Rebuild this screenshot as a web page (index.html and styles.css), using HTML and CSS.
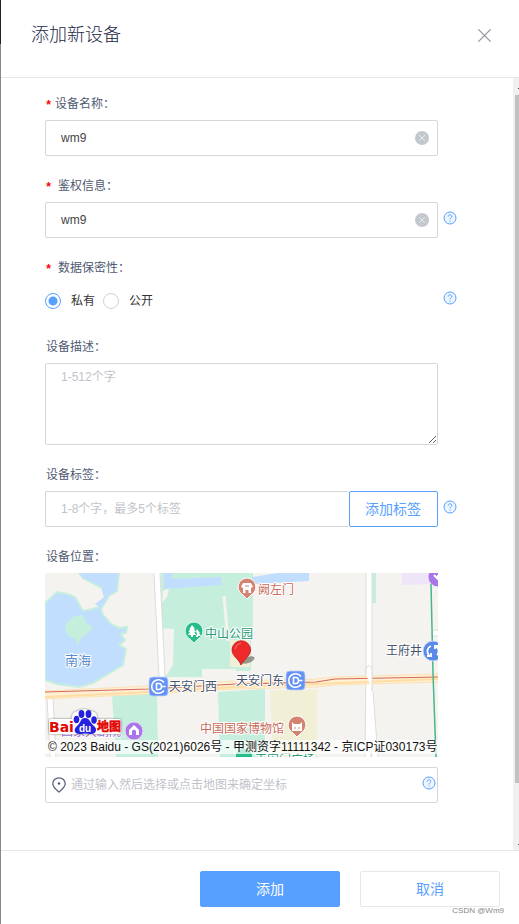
FILE: index.html
```html
<!DOCTYPE html>
<html lang="zh-CN">
<head>
<meta charset="utf-8">
<meta name="viewport" content="width=device-width, initial-scale=1">
<title>添加新设备</title>
<link rel="stylesheet" href="styles.css">
</head>
<body>
<svg class="defs" aria-hidden="true">
  <symbol id="help" viewBox="0 0 14 14">
    <circle cx="7" cy="7" r="6" fill="#edf5ff" stroke="#57a0ff"/>
    <path d="M5.2 5.6C5.2 3.2 8.8 3.2 8.8 5.5C8.8 6.8 7 6.8 7 8.4M7 9.6V10.6" fill="none" stroke="#57a0ff"/>
  </symbol>
  <symbol id="clear" viewBox="0 0 14 14">
    <circle cx="7" cy="7" r="7" fill="#c3c8ce"/>
    <path d="M4.2 4.2L9.8 9.8M9.8 4.2L4.2 9.8" stroke="#eceef0" stroke-width=".9"/>
  </symbol>
  <symbol id="metro" viewBox="0 0 20 20">
    <rect x=".5" y=".5" width="19" height="19" rx="4" fill="#6592f5" stroke="#a9c2f8"/>
    <path d="M15.500 6A6.800 6.800 0 1 0 15.500 14M8 7H10.500Q13 7 13 10T10.500 13H8ZM13 10H17" fill="none" stroke="#fff" stroke-width="1.600"/>
  </symbol>
  <symbol id="marker" viewBox="0 0 20 24">
    <path d="M10 1A9 9 0 0 0 6 18L10 22L14 18A9 9 0 0 0 10 1Z"/>
  </symbol>
</svg>

<main class="drawer">
  <header class="header">
    <h1 class="title">添加新设备</h1>
    <button class="close" type="button" aria-label="关闭">
      <svg viewBox="0 0 12 12"><path d="M.3 .3L11.7 11.7M11.7 .3L.3 11.7" stroke="#909399" stroke-width="1.1"/></svg>
    </button>
  </header>

  <div class="body">
    <form class="form" id="device-form">
      <div class="field">
        <label class="label" for="name"><span class="star">*</span>设备名称：</label>
        <div class="control">
          <input class="input" id="name" type="text" value="wm9">
          <button class="clear" type="button" aria-label="清空"><svg><use href="#clear"/></svg></button>
        </div>
      </div>

      <div class="field">
        <label class="label spaced" for="auth"><span class="star">*</span>鉴权信息：</label>
        <div class="control">
          <input class="input" id="auth" type="text" value="wm9">
          <button class="clear" type="button" aria-label="清空"><svg><use href="#clear"/></svg></button>
        </div>
        <button class="help" type="button" aria-label="帮助"><svg><use href="#help"/></svg></button>
      </div>

      <div class="field" role="radiogroup" aria-labelledby="privacy">
        <div class="label spaced" id="privacy"><span class="star">*</span>数据保密性：</div>
        <div class="control radios">
          <label class="option"><input type="radio" name="privacy" checked>私有</label>
          <label class="option"><input type="radio" name="privacy">公开</label>
        </div>
        <button class="help" type="button" aria-label="帮助"><svg><use href="#help"/></svg></button>
      </div>

      <div class="field">
        <label class="label" for="desc">设备描述：</label>
        <textarea class="control input area" id="desc" placeholder="1-512个字"></textarea>
      </div>

      <div class="field">
        <label class="label" for="tag">设备标签：</label>
        <div class="control group">
          <input class="input" id="tag" type="text" placeholder="1-8个字，最多5个标签">
          <button class="add-tag" type="button">添加标签</button>
        </div>
        <button class="help" type="button" aria-label="帮助"><svg><use href="#help"/></svg></button>
      </div>

      <div class="field">
        <label class="label" for="address">设备位置：</label>
        <div class="control location">
          <div class="map">
            <svg class="map-art" viewBox="0 0 393 184" preserveAspectRatio="xMidYMid slice" role="img" aria-label="地图">
              <rect width="393" height="184" fill="#f4f3f0"/>
              <path d="M0 30L12 19L22 21L30 24L38 38L48 36L54 34L60 24L57 15L38 5L34 0H74L72 18L64 23L56 36L58 42L66 51L74 55L82 54L81 60L75 61L80 67L74 72L81 76L78 92L63 101L48 110L34 114L12 111L0 107Z" fill="#c1deff" stroke="#c5efdc" stroke-width="2"/>
              <path d="M35 0H73L71 18L63 23L56 35L50 31L59 24L56 13L38 5Z" fill="#c1deff"/>
              <path d="M20 55L22 49L30 43L38 42L40 49L48 54L42 61L36 65L33 72L30 66L23 63Z" fill="#c5efdc"/>
              <path d="M116 0H208V63L206 67V98H191V96H157V104H126L117 105Z" fill="#c5efdc"/>
              <path d="M117 55L129 56L128 92L122 102H117ZM118 18L124 15L122 24L117 30Z" fill="#f4f3f0"/>
              <path d="M119 0H127V6L176 4L177 12L119 16ZM207 4L233 0H264V8L207 11Z" fill="#c1deff"/>
              <path d="M179 23L183 68" stroke="#f4f3f0" stroke-width="3"/>
              <path d="M67 122L112 119L113 184H71ZM173 119L220 116V184H175Z" fill="#c5efdc"/>
              <path d="M225 118L272 116V184H228ZM185 67H205V93H185ZM186 92H205V94H186Z" fill="#f1f0d6"/>
              <path d="M326 0H331V30H326Z" fill="#c5efdc"/>
              <path d="M357 0H393V11L357 12Z" fill="#eee6f8"/>
              <path d="M112 0L117 104M324 0V92L323 184M325 118L330 184M5 124L8 184M388 60H393" fill="none" stroke="#dfdcda" stroke-width="7"/>
              <path d="M112 0L117 104M324 0V92L323 184M325 118L330 184M5 124L8 184M388 60H393" fill="none" stroke="#fff" stroke-width="5"/>
              <path d="M0 122L104 117L191 112L271 110L290 108L393 105" fill="none" stroke="#fbe2b6" stroke-width="9"/>
              <path d="M0 122L104 117L191 112L271 110L290 108L393 105" fill="none" stroke="#fff0d5" stroke-width="7"/>
              <path d="M0 124L104 119L191 114L271 111L393 106" fill="none" stroke="#ffdda5" stroke-width="2"/>
              <path d="M0 119L104 116L191 111L271 109L290 106L393 104" fill="none" stroke="#d4685a" stroke-width="1.2"/>
              <path d="M321 101V96Q324 89 327 96V117" fill="#fff" stroke="#dfdcda"/>
              <path d="M386 11L388 100L391 184" fill="none" stroke="#48b58e" stroke-width="1.5"/>

              <g fill="#d58371" stroke="#fff">
                <use href="#marker" x="192" y="4" width="20" height="24"/>
                <use href="#marker" x="242" y="142" width="20" height="24"/>
              </g>
              <g fill="#27bd8b" stroke="#d7f6e9">
                <use href="#marker" x="139" y="48" width="20" height="24"/>
                <use href="#marker" x="189" y="174" width="20" height="24"/>
              </g>
              <path d="M196 14L198 10H206L208 14L206 15V20H203.500V17H200.500V20H198V15ZM247 149L249 151H255L257 149V158H247Z" fill="#fff"/>
              <path d="M249 155H251M253 155H255M200 13H204" stroke="#d58371"/>
              <path d="M147 52L150 56H149L151 59H149.500L151 62H148V64H146V62H143L145 59H143.500L145 56H144.500ZM152 56L155 60H154L156 63H153V64H151V63L152 61L151 58Z" fill="#fff"/>
              <circle cx="89" cy="158" r="9" fill="#aa75e8" stroke="#e8d7fa"/>
              <path d="M84 157L89 152L94 157V162H84Z" fill="#fff"/>
              <path d="M87 162V158Q89 155 91 158V162Z" fill="#aa75e8"/>
              <circle cx="393" cy="4" r="9.500" fill="#aa75e8"/>
              <path d="M389 2L393 6V2" fill="none" stroke="#fff" stroke-width="2"/>
              <circle cx="388" cy="78" r="10" fill="#5888e8" stroke="#c6d8fb"/>
              <path d="M384 82A5.500 5.500 0 0 1 386 73M390 73A5.500 5.500 0 0 1 392 82M382 83H386V80M394 73H390V76" fill="none" stroke="#fff" stroke-width="1.800"/>
              <use href="#metro" x="103.500" y="103.500" width="20" height="20"/>
              <use href="#metro" x="240.500" y="97.500" width="20" height="20"/>

              <g class="place">
                <text x="213" y="21" fill="#c76b58">阙左门</text>
                <text x="160" y="65" fill="#279a76">中山公园</text>
                <text x="20" y="92" class="water" fill="#5a8dcc">南海</text>
                <text x="341" y="82" fill="#45536d">王府井</text>
                <text x="124" y="118" fill="#45536d">天安门西</text>
                <text x="191" y="112" fill="#45536d">天安门东</text>
                <text x="155" y="160" fill="#c76b58">中国国家博物馆</text>
                <text x="16" y="163" fill="#a06edc">国家大剧院</text>
                <text x="210" y="191" fill="#279a76">天安门广场</text>
              </g>

              <ellipse cx="203" cy="87" rx="7" ry="3" transform="rotate(-20 203 87)" fill="#65665f" opacity=".65"/>
              <path d="M196 92C194 86 187 83 187 77A9.300 9.300 0 0 1 205.600 77C205.600 83 199 86 196 92Z" fill="#ee2929" stroke="#b51c22" stroke-width=".8"/>
              <path d="M190 76Q191 71 196 70" fill="none" stroke="#f77b75"/>
            </svg>
            <svg class="logo" viewBox="0 0 76 30" role="img" aria-label="百度地图">
              <path class="logo-plate" d="M4 11H25Q24 4 31 3Q38 -1 43 3Q51 3 50 11H72Q74 11 74 13V24Q74 26 72 26H4Q2 26 2 24V13Q2 11 4 11Z" fill="#fff"/>
              <text x="2" y="24" class="logo-latin">Bai</text>
              <text x="50" y="23" class="logo-cjk">地图</text>
              <g fill="#2521de">
                <ellipse cx="29.500" cy="11.500" rx="2.800" ry="3.800"/>
                <ellipse cx="34.500" cy="6" rx="2.900" ry="3.900"/>
                <ellipse cx="41.500" cy="6" rx="2.900" ry="3.900"/>
                <ellipse cx="47" cy="12" rx="2.800" ry="3.700"/>
                <path d="M38 10C43 10 43 15 47 18C51 21 49 27 43 26Q38 25 34 26C27 27 26 21 30 18C34 15 33 10 38 10Z"/>
              </g>
              <text x="32" y="24" class="logo-du">du</text>
            </svg>
            <div class="copyright">© 2023 Baidu - GS(2021)6026号 - 甲测资字11111342 - 京ICP证030173号</div>
          </div>
          <div class="address">
            <svg class="pin" viewBox="0 0 14 16" aria-hidden="true"><path d="M7 .8C3.300 .8 .8 3.400 .8 6.700C.8 10 4 12.500 7 15C10 12.500 13.200 10 13.200 6.700C13.200 3.400 10.700 .8 7 .8Z" fill="none" stroke="#5c6780" stroke-width="1.300"/><circle cx="7" cy="6.500" r="1.200" fill="#4c5872"/></svg>
            <input class="address-input" id="address" type="text" placeholder="通过输入然后选择或点击地图来确定坐标">
            <button class="help" type="button" aria-label="帮助"><svg><use href="#help"/></svg></button>
          </div>
        </div>
      </div>
    </form>
    <div class="scrollbar" aria-hidden="true"><div class="thumb"></div></div>
  </div>

  <footer class="footer">
    <button class="button primary" type="submit" form="device-form">添加</button>
    <button class="button" type="button">取消</button>
    <small class="credit">CSDN @Wm9</small>
  </footer>
</main>
</body>
</html>
```

FILE: styles.css
```css
* {
  box-sizing: border-box;
}

body {
  margin: 0;
  background: #fff;
  color: #333;
  font: 12px/20px "Liberation Sans", "Noto Sans CJK SC", sans-serif;
}

button,
input,
textarea {
  margin: 0;
  font: inherit;
}

button {
  padding: 0;
  border: 0;
  background: none;
  cursor: pointer;
}

svg {
  display: block;
}

.defs {
  position: absolute;
  width: 0;
  height: 0;
}

.drawer {
  display: flex;
  flex-direction: column;
  min-height: 100vh;
  border-left: 1px solid;
  border-image: linear-gradient(#222 45px, #888 45px) 1;
}

.header {
  display: flex;
  align-items: center;
  justify-content: space-between;
  padding: 21px 28px 28px 30px;
  border-bottom: 1px solid #e6e6e6;
}

.title {
  margin: 0;
  color: #1c2745;
  font-size: 18px;
  font-weight: 300;
  line-height: 28px;
}

.close svg {
  width: 13px;
  height: 13px;
}

.body {
  display: flex;
  flex: 1;
}

.form {
  display: flex;
  flex: 1;
  flex-direction: column;
  gap: 20px;
  min-width: 0;
  padding: 16px 56px 16px 44px;
}

.field {
  display: grid;
  grid-template-columns: minmax(0, 1fr) 14px;
  gap: 6px 5px;
}

.label {
  display: flex;
  grid-column: 1 / -1;
  color: #505a72;
}

.label:not(:has(.star)) {
  padding-left: 1px;
}

.star {
  width: 10px;
  height: 20px;
  padding-top: 2px;
  color: #f00;
  font-family: "Liberation Mono", monospace;
  font-size: 12px;
  font-weight: bold;
}

.spaced .star {
  width: 13px;
}

.control {
  position: relative;
  grid-column: 1;
  min-width: 0;
}

.input {
  display: block;
  width: 100%;
  height: 36px;
  padding: 0 15px;
  border: 1px solid #d5d7da;
  border-radius: 2px;
  outline: 0;
  background: #fff;
  color: #444;
}

::placeholder {
  color: #bfc3ca;
  opacity: 1;
}

.clear {
  position: absolute;
  top: 11px;
  right: 9px;
}

.clear svg,
.help svg {
  width: 14px;
  height: 14px;
}

.help {
  align-self: center;
  padding-bottom: 5px;
}

.radios {
  display: flex;
  gap: 8px;
  align-items: center;
  height: 33px;
}

.option {
  display: flex;
  gap: 10px;
  align-items: center;
}

.option input {
  width: 16px;
  height: 16px;
  border: 1px solid #cdd2d9;
  border-radius: 50%;
  appearance: none;
}

.option input:checked {
  border-color: #57a0ff;
  background: radial-gradient(circle, #57a0ff 4px, #fff 5px);
}

.area {
  height: 82px;
  padding: 3px 15px;
  resize: vertical;
}

.group {
  display: flex;
}

.group .input {
  flex: 1;
  min-width: 0;
  border-right: 0;
}

.add-tag {
  padding: 0 16px 0 15px;
  border: 1px solid #57a0ff;
  border-radius: 2px;
  color: #57a0ff;
  font-size: 14px;
}

.location {
  display: grid;
  gap: 10px;
}

.map {
  position: relative;
  overflow: hidden;
  height: 184px;
}

.map-art {
  width: 100%;
  height: 100%;
}

.place {
  font-size: 12px;
  paint-order: stroke;
  stroke: #fff;
  stroke-width: 2px;
  stroke-linejoin: round;
}

.water {
  font-size: 13px;
}

.logo {
  position: absolute;
  bottom: 19px;
  left: 2px;
  width: 76px;
  height: 30px;
}

.logo-plate {
  filter: drop-shadow(0 0 1px #777);
}

.logo-latin {
  fill: #e10602;
  font-family: "DejaVu Sans", sans-serif;
  font-size: 14px;
  font-weight: bold;
}

.logo-cjk {
  fill: #e10602;
  stroke: #e10602;
  stroke-width: 0.5px;
  font-size: 12px;
  font-weight: bold;
}

.logo-du {
  fill: #fff;
  font-size: 10px;
  font-weight: bold;
}

.copyright {
  position: absolute;
  right: 0;
  bottom: 3px;
  left: 0;
  padding-left: 3px;
  background: rgb(255 255 255 / 70%);
  color: #111;
  line-height: 14px;
  white-space: nowrap;
}

.address {
  display: flex;
  align-items: center;
  height: 36px;
  padding: 0 1px 0 6px;
  border: 1px solid #d5d7da;
  border-radius: 2px;
}

.pin {
  width: 14px;
  height: 16px;
}

.address-input {
  flex: 1;
  min-width: 0;
  padding: 0 5px;
  border: 0;
  outline: 0;
  background: none;
}

.scrollbar {
  position: relative;
  display: flex;
  width: 6px;
  padding: 17px 0 67px 2px;
  background: #f0f0f0;
}

.scrollbar::before,
.scrollbar::after {
  position: absolute;
  right: 0;
  width: 1px;
  height: 1px;
  background: #505050;
  content: "";
}

.scrollbar::before {
  top: 10px;
}

.scrollbar::after {
  bottom: 5px;
}

.thumb {
  flex: 1;
  background: #c1c1c1;
}

.footer {
  position: relative;
  display: flex;
  gap: 20px;
  justify-content: flex-end;
  padding: 20px 19px 17px;
  border-top: 1px solid #e6e6e6;
}

.button {
  width: 140px;
  height: 36px;
  border: 1px solid #e6e8ec;
  border-radius: 2px;
  color: #57a0ff;
  font-size: 14px;
}

.primary {
  border-color: #57a0ff;
  background: #57a0ff;
  color: #fff;
}

.credit {
  position: absolute;
  right: 15px;
  bottom: 8px;
  color: #888;
  font-size: 8px;
  line-height: 10px;
}
```
